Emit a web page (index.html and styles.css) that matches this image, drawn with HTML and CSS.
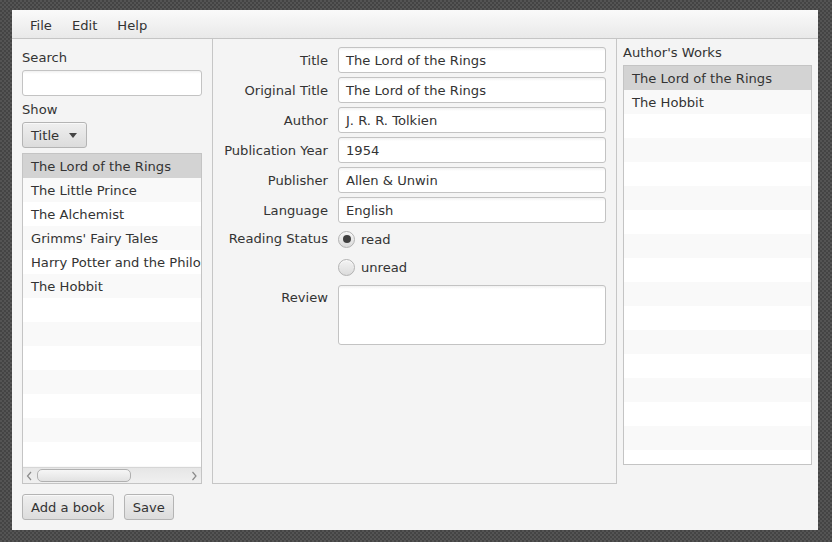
FILE: index.html
```html
<!DOCTYPE html>
<html>
<head>
<meta charset="utf-8">
<link rel="stylesheet" href="styles.css">
</head>
<body>
<div class="window">
  <div class="menubar">
    <span class="menu">File</span>
    <span class="menu">Edit</span>
    <span class="menu">Help</span>
  </div>
  <div class="main">
    <div class="left">
      <div class="label">Search</div>
      <div class="field"></div>
      <div class="label">Show</div>
      <div class="button dropdown">Title<span class="arrow"></span></div>
      <div class="list left-list">
        <div class="rows">
          <div class="row selected">The Lord of the Rings</div>
          <div class="row odd">The Little Prince</div>
          <div class="row">The Alchemist</div>
          <div class="row odd">Grimms' Fairy Tales</div>
          <div class="row">Harry Potter and the Philosopher's Stone</div>
          <div class="row odd">The Hobbit</div>
          <div class="row"></div>
          <div class="row odd"></div>
          <div class="row"></div>
          <div class="row odd"></div>
          <div class="row"></div>
          <div class="row odd"></div>
          <div class="row"></div>
          <div class="row odd"></div>
        </div>
        <div class="hscroll">
          <svg class="sarrow" width="10" height="16" viewBox="0 0 10 16"><polyline points="6,4 2.5,8 6,12" fill="none" stroke="#8a8a8a" stroke-width="1.2"/></svg>
          <div class="track"><div class="thumb"></div></div>
          <svg class="sarrow" width="10" height="16" viewBox="0 0 10 16"><polyline points="3.5,4 7,8 3.5,12" fill="none" stroke="#8a8a8a" stroke-width="1.2"/></svg>
        </div>
      </div>
    </div>
    <div class="center">
      <div class="flabel">Title</div>
      <div class="field">The Lord of the Rings</div>
      <div class="flabel">Original Title</div>
      <div class="field">The Lord of the Rings</div>
      <div class="flabel">Author</div>
      <div class="field">J. R. R. Tolkien</div>
      <div class="flabel">Publication Year</div>
      <div class="field">1954</div>
      <div class="flabel">Publisher</div>
      <div class="field">Allen &amp; Unwin</div>
      <div class="flabel">Language</div>
      <div class="field">English</div>
      <div class="flabel top3">Reading Status</div>
      <div class="radios">
        <div class="radio-item"><span class="radio checked"><span class="dot"></span></span>read</div>
        <div class="radio-item"><span class="radio"></span>unread</div>
      </div>
      <div class="flabel top4">Review</div>
      <div class="field area"></div>
    </div>
    <div class="right">
      <div class="label">Author's Works</div>
      <div class="list right-list">
        <div class="row selected">The Lord of the Rings</div>
        <div class="row odd">The Hobbit</div>
        <div class="row"></div>
        <div class="row odd"></div>
        <div class="row"></div>
        <div class="row odd"></div>
        <div class="row"></div>
        <div class="row odd"></div>
        <div class="row"></div>
        <div class="row odd"></div>
        <div class="row"></div>
        <div class="row odd"></div>
        <div class="row"></div>
        <div class="row odd"></div>
        <div class="row"></div>
        <div class="row odd"></div>
        <div class="row"></div>
      </div>
    </div>
  </div>
  <div class="bottom">
    <div class="button">Add a book</div>
    <div class="button">Save</div>
  </div>
</div>
</body>
</html>
```
FILE: styles.css
```css
* { box-sizing: border-box; }
html, body { margin: 0; padding: 0; }
body {
  width: 832px;
  height: 542px;
  overflow: hidden;
  background: repeating-conic-gradient(#444444 0 25%, #545454 0 50%) 0 0 / 4px 4px;
  font-family: "DejaVu Sans", sans-serif;
  font-size: 13.12px;
  color: #333333;
  padding-top: 10px;
  padding-left: 12px;
}
.window {
  width: 806px;
  height: 520px;
  background: #f4f4f4;
  display: flex;
  flex-direction: column;
}
.menubar {
  height: 29px;
  flex: none;
  border-bottom: 1px solid #c5c5c5;
  background: linear-gradient(to bottom, #fafafa, #e9e9e9);
  display: flex;
  align-items: center;
  padding-left: 8px;
  padding-top: 3px;
}
.menu {
  padding: 0 10px;
  line-height: 16px;
}
.main {
  height: 445px;
  flex: none;
  display: flex;
  align-items: flex-start;
}
.left {
  width: 180px;
  margin-left: 10px;
  height: 445px;
  padding-top: 10px;
  display: flex;
  flex-direction: column;
  gap: 5px;
}
.label {
  line-height: 18px;
  height: 16px;
  white-space: nowrap;
}
.field {
  height: 26px;
  border: 1px solid #c3c3c3;
  border-radius: 3px;
  background: linear-gradient(to bottom, #f1f1f1 0, #ffffff 3px);
  padding: 0 7px;
  line-height: 26px;
  white-space: nowrap;
  overflow: hidden;
}
.field.area {
  height: 60px;
}
.button {
  height: 26px;
  border: 1px solid #b4b4b4;
  border-radius: 3px;
  background: linear-gradient(to bottom, #efefef, #dcdcdc);
  box-shadow: inset 0 1px 0 #f9f9f9;
  padding: 0 8px;
  line-height: 26px;
  white-space: nowrap;
  overflow: hidden;
}
.dropdown {
  align-self: flex-start;
  width: 65px;
}
.arrow {
  display: inline-block;
  width: 0;
  height: 0;
  margin-left: 10px;
  vertical-align: 2px;
  border-left: 4px solid transparent;
  border-right: 4px solid transparent;
  border-top: 5px solid #444;
}
.list {
  border: 1px solid #c4c4c4;
  background: #ffffff;
  overflow: hidden;
}
.left-list {
  height: 331px;
  display: flex;
  flex-direction: column;
}
.rows {
  flex: 1;
  overflow: hidden;
}
.row {
  height: 24px;
  line-height: 26px;
  padding-left: 8px;
  white-space: nowrap;
  overflow: hidden;
  background: #ffffff;
}
.row.odd { background: #f9f9f9; }
.row.selected { background: #d3d3d3; }
.hscroll {
  height: 16px;
  flex: none;
  border-top: 1px solid #d6d6d6;
  background: linear-gradient(to bottom, #e6e6e6, #f0f0f0);
  display: flex;
  align-items: center;
}
.sarrow { flex: none; display: block; margin: 0 2px; }
.track {
  flex: 1;
  height: 15px;
  padding: 1px 0;
}
.thumb {
  width: 94px;
  height: 13px;
  border: 1px solid #b0b0b0;
  border-radius: 5px;
  background: linear-gradient(to bottom, #f6f6f6, #e2e2e2);
}
.center {
  width: 405px;
  height: 445px;
  margin-left: 10px;
  border: 1px solid #c6c6c6;
  border-top: none;
  padding: 8px 10px 0 10px;
  display: grid;
  grid-template-columns: 105px 268px;
  column-gap: 10px;
  row-gap: 4px;
  align-content: start;
}
.flabel {
  text-align: right;
  align-self: start;
  height: 26px;
  padding-top: 1px;
  line-height: 26px;
  white-space: nowrap;
}
.flabel.top3 { padding-top: 0; line-height: 24px; height: 24px; }
.flabel.top4 { padding-top: 0; line-height: 26px; height: 26px; }
.radios {
  display: flex;
  flex-direction: column;
  gap: 10px;
  padding: 3px 0 5px 0;
}
.radio-item {
  height: 18px;
  display: flex;
  align-items: center;
  line-height: 20px;
  padding-top: 1px;
}
.radio {
  width: 17px;
  height: 17px;
  flex: none;
  border-radius: 50%;
  border: 1px solid #b2b2b2;
  background: linear-gradient(to bottom, #f3f3f3, #dcdcdc);
  box-shadow: inset 0 1px 0 #fbfbfb;
  margin-right: 6px;
  margin-top: -1px;
  display: flex;
  align-items: center;
  justify-content: center;
}
.dot {
  width: 8px;
  height: 8px;
  border-radius: 50%;
  background: #404040;
}
.right {
  width: 201px;
  height: 445px;
  padding: 5px 6px 0 6px;
  display: flex;
  flex-direction: column;
  gap: 5px;
}
.right-list {
  height: 400px;
}
.bottom {
  flex: none;
  display: flex;
  gap: 10px;
  padding: 10px 0 0 10px;
}
```
